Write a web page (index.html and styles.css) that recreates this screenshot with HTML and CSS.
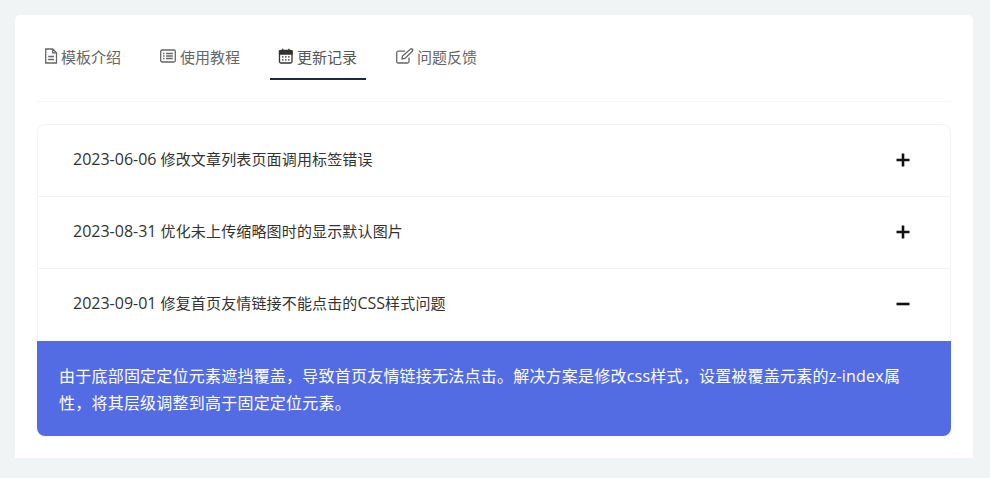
FILE: index.html
```html
<!DOCTYPE html>
<html lang="zh-CN">
<head>
<meta charset="utf-8">
<title>更新记录</title>
<link rel="stylesheet" href="styles.css">
</head>
<body>
<main class="card">
  <nav class="tabs">
    <a class="tab">
      <svg class="icon icon-doc" viewBox="0 0 13 16"><path d="M.7 1h7l3.800 3.800V15H.7z M7.700 1v3.800h3.800 M3.200 8.500h5.800 M3.200 11.500h5.800"/></svg>
      <span>模板介绍</span>
    </a>
    <a class="tab">
      <svg class="icon icon-wide" viewBox="0 0 18 16"><rect x="1.700" y="2" width="14.600" height="12" rx="1.500"/><path d="M4 5.500h1.500 M7 5.500h6.800 M4 8h1.500 M7 8h6.800 M4 10.500h1.500 M7 10.500h6.800"/></svg>
      <span>使用教程</span>
    </a>
    <a class="tab active">
      <svg class="icon" viewBox="0 0 16 16"><rect x="1.500" y="2.500" width="12.500" height="12.500" rx="1.500"/><path class="thick" d="M1.500 3h12.500v3H1.500z M4.700 .7v2.300 M10.800 .7v2.300"/><path d="M4 8.800h1.500 M7 8.800h1.500 M10 8.800h1.500 M4 11.800h1.500 M7 11.800h1.500 M10 11.800h1.500"/></svg>
      <span>更新记录</span>
    </a>
    <a class="tab">
      <svg class="icon icon-wide" viewBox="0 0 18 16"><path d="M13 9.500V13.500A1.500 1.500 0 0 1 11.500 15H2.200A1.500 1.500 0 0 1 .7 13.500V4.700A1.500 1.500 0 0 1 2.200 3.200H9"/><path d="M6.500 8 6 11l3-.5 7.300-7.300a1.400 1.400 0 0 0-2-2z"/></svg>
      <span>问题反馈</span>
    </a>
  </nav>
  <section class="accordion">
    <div class="row">
      <span class="title"><span class="latin">2023-06-06</span> 修改文章列表页面调用标签错误</span>
      <svg class="toggle" viewBox="0 0 14 14"><path d="M7 .5v13 M.5 7h13"/></svg>
    </div>
    <div class="row">
      <span class="title"><span class="latin">2023-08-31</span> 优化未上传缩略图时的显示默认图片</span>
      <svg class="toggle" viewBox="0 0 14 14"><path d="M7 .5v13 M.5 7h13"/></svg>
    </div>
    <div class="row open">
      <span class="title"><span class="latin">2023-09-01</span> 修复首页友情链接不能点击的<span class="latin">CSS</span>样式问题</span>
      <svg class="toggle" viewBox="0 0 14 14"><path d="M.5 7h13"/></svg>
    </div>
    <div class="panel">由于底部固定定位元素遮挡覆盖，导致首页友情链接无法点击。解决方案是修改css样式，设置被覆盖元素的z-index属性，将其层级调整到高于固定定位元素。</div>
  </section>
</main>
</body>
</html>
```
FILE: styles.css
```css
* { box-sizing: border-box; }
html, body { margin: 0; }
body {
  height: 478px;
  overflow: hidden;
  padding: 15px 17px 20px 15px;
  background: #f0f4f5;
  font-family: "Open Sans", "Noto Sans CJK SC", sans-serif;
  color: #333;
}
.card {
  height: 443px;
  padding: 22px;
  background: #fff;
  border-radius: 5px 5px 0 0;
}
.tabs {
  display: flex;
  height: 65px;
  border-bottom: 1px solid #f5f6f7;
}
.tab {
  display: flex;
  align-items: center;
  gap: 3px;
  height: 43px;
  padding: 0 8px 3px;
  margin-right: 22px;
  font-size: 15px;
  color: #666;
  border-bottom: 2px solid transparent;
}
.tab.active {
  color: #555;
  border-bottom-color: #1f2937;
  padding: 0 9px 3px 8px;
}
.icon {
  flex: none;
  width: 16px;
  height: 16px;
  fill: none;
  stroke: currentColor;
  stroke-width: 1.3;
}
.icon-doc { width: 13px; }
.icon-wide { width: 18px; }
.tab.active .icon { color: #333; }
.thick { fill: currentColor; }
.accordion {
  margin-top: 22px;
  height: 312px;
  border: 1px solid #f2f3f5;
  border-radius: 8px;
  display: flex;
  flex-direction: column;
}
.row {
  flex: none;
  height: 72px;
  padding: 0 40px 2px 35px;
  display: flex;
  align-items: center;
  justify-content: space-between;
  font-size: 15px;
  color: #333;
  border-bottom: 1px solid #f0f1f3;
}
.row.open { border-bottom: 0; }
.title { letter-spacing: .15px; margin-bottom: 2px; }
.latin { font-size: 16px; letter-spacing: 0; }
.toggle {
  flex: none;
  width: 14px;
  height: 14px;
  fill: none;
  stroke: #111;
  stroke-width: 2.6;
}
.panel {
  flex: 1;
  margin: 0 -1px -1px;
  padding: 22px 45px 0 22px;
  background: #536ce4;
  color: #fff;
  font-size: 16px;
  letter-spacing: .22px;
  line-height: 27px;
  border-radius: 0 0 8px 8px;
}
```
